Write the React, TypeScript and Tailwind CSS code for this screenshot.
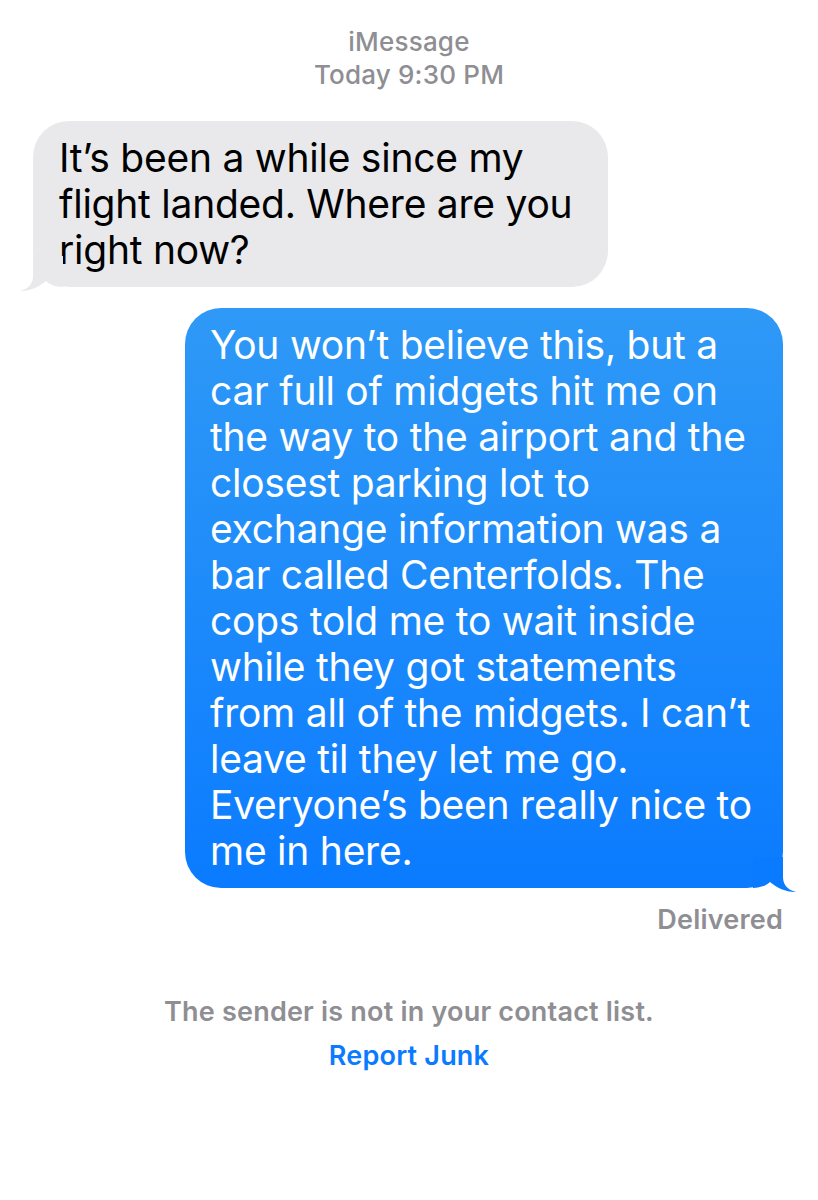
const FONT = "font-['Inter','Noto_Sans',sans-serif]";

const INCOMING = [
  "It\u2019s been a while since my",
  "flight landed. Where are you",
  "right now?",
];

const OUTGOING = [
  "You won\u2019t believe this, but a",
  "car full of midgets hit me on",
  "the way to the airport and the",
  "closest parking lot to",
  "exchange information was a",
  "bar called Centerfolds. The",
  "cops told me to wait inside",
  "while they got statements",
  "from all of the midgets. I can\u2019t",
  "leave til they let me go.",
  "Everyone\u2019s been really nice to",
  "me in here.",
];

function Tail({ color, flip }: { color: string; flip?: boolean }) {
  return (
    <svg
      width="46"
      height="36"
      viewBox="0 0 46 36"
      className={
        flip
          ? "absolute -right-[14px] -bottom-[5px] -scale-x-100"
          : "absolute -left-[14px] -bottom-[5px]"
      }
    >
      <path
        d="M14 0 H44 V31 C36 31 30 28 27 25 C20 31 10 35.5 1 35 C9 33 14 28 14 20 Z"
        fill={color}
      />
    </svg>
  );
}

export default function App() {
  return (
    <div className={`w-[818px] h-[1200px] bg-white ${FONT}`}>
      {/* header */}
      <div className="pt-[25px] flex flex-col items-center text-[26px] leading-[33px] font-medium tracking-[0.2px] text-[#8e8e93]">
        <span>iMessage</span>
        <span>Today 9:30 PM</span>
      </div>

      {/* incoming */}
      <div className="mt-[30px] pl-[33px]">
        <div className="relative w-[575px] rounded-[36px] bg-[#e9e9eb] px-[26px] py-[14px] text-[39px] leading-[46px] text-black tracking-[-0.25px]">
          {INCOMING.map((l) => (
            <div key={l} className="relative whitespace-nowrap">{l}</div>
          ))}
          <Tail color="#e9e9eb" />
        </div>
      </div>

      {/* outgoing */}
      <div className="mt-[21px] flex justify-end pr-[35px]">
        <div className="relative w-[598px] rounded-[36px] bg-gradient-to-b from-[#2e99f6] to-[#0a7bff] px-[25px] py-[14px] text-[39px] leading-[46px] text-white tracking-[-0.25px]">
          {OUTGOING.map((l) => (
            <div key={l} className="relative whitespace-nowrap">{l}</div>
          ))}
          <Tail color="#0a7bff" flip />
        </div>
      </div>

      <div className="mt-[17px] pr-[35px] text-right text-[27px] leading-[30px] font-semibold tracking-[0.2px] text-[#8e8e93]">
        Delivered
      </div>

      <div className="mt-[62px] flex flex-col items-center text-[27px] font-semibold tracking-[0.2px]">
        <span className="leading-[30px] text-[#8e8e93]">The sender is not in your contact list.</span>
        <span className="mt-[14px] leading-[30px] text-[#0a7bff]">Report Junk</span>
      </div>
    </div>
  );
}
